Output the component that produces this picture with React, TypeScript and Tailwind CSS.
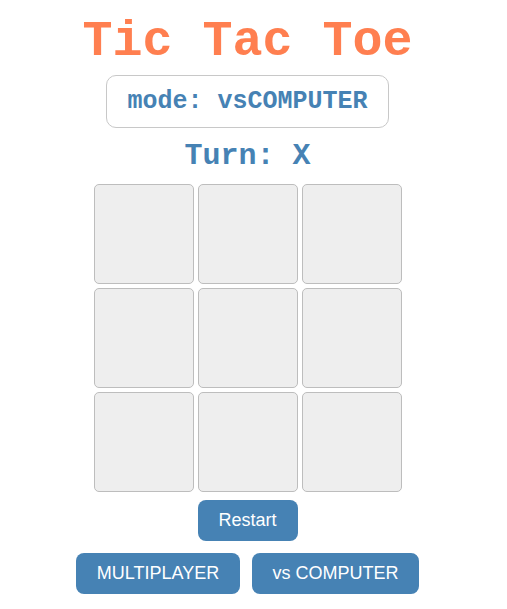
export default function App() {
  const cells = Array.from({ length: 9 });

  return (
    <div className="w-[495px] flex flex-col items-center pt-[14px] font-['Liberation_Sans',Arial,sans-serif]">
      <h1 className="font-['Liberation_Mono','Courier_New',monospace] text-[50px] leading-[56px] font-bold text-[#ff7f50]">
        Tic Tac Toe
      </h1>
      <div className="mt-[5px] h-[53px] px-[20px] flex items-center rounded-[10px] border border-[#c8c8c8] font-['Liberation_Mono','Courier_New',monospace] text-[25px] font-bold text-[#4682b4]">
        mode: vsCOMPUTER
      </div>
      <div className="mt-[11px] font-['Liberation_Mono','Courier_New',monospace] text-[30px] leading-[34px] font-bold text-[#4682b4]">
        Turn: X
      </div>
      <div className="mt-[11px] grid grid-cols-[100px_100px_100px] gap-[4px]">
        {cells.map((_, i) => (
          <button
            key={i}
            className="w-[100px] h-[100px] bg-[#eeeeee] border border-[#bdbdbd] rounded-[5px]"
          />
        ))}
      </div>
      <button className="mt-[8px] w-[100px] h-[41px] rounded-[8px] bg-[#4682b4] text-white text-[18px]">
        Restart
      </button>
      <div className="mt-[12px] flex gap-[12px]">
        <button className="w-[164px] h-[41px] rounded-[8px] bg-[#4682b4] text-white text-[18px]">
          MULTIPLAYER
        </button>
        <button className="w-[167px] h-[41px] rounded-[8px] bg-[#4682b4] text-white text-[18px]">
          vs COMPUTER
        </button>
      </div>
    </div>
  );
}
